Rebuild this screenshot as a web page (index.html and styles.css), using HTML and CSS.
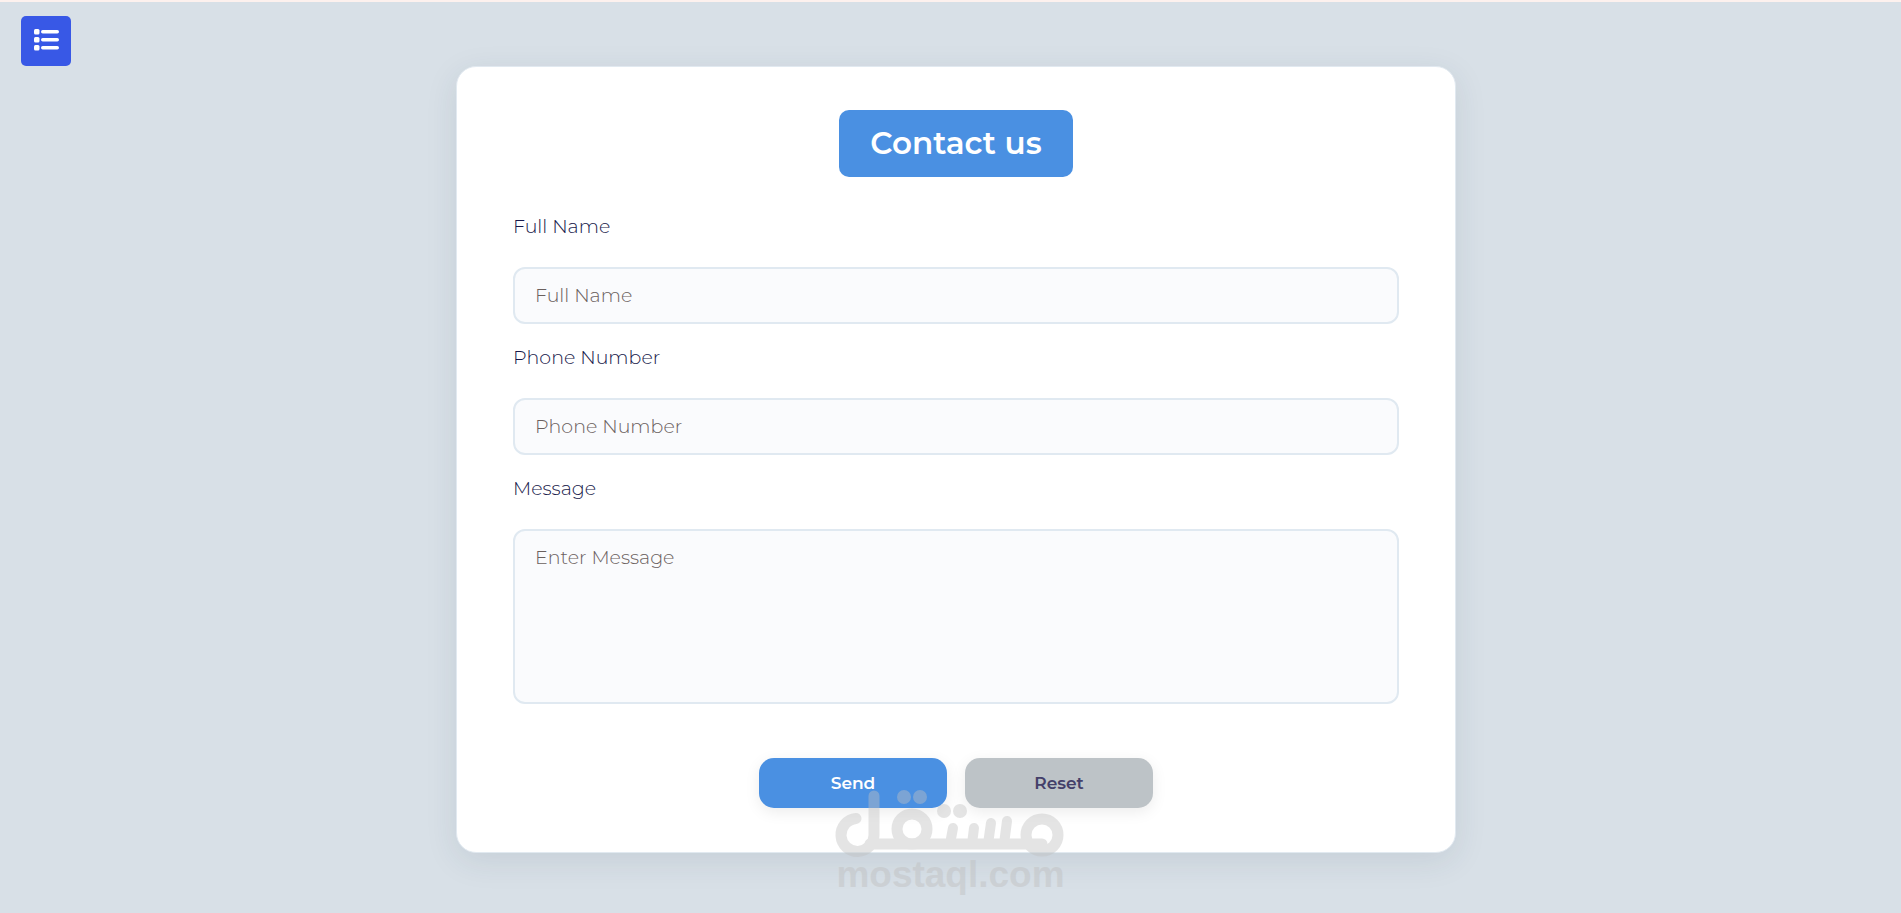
FILE: index.html
```html
<!DOCTYPE html>
<html lang="en">
<head>
    <meta charset="UTF-8">
    <meta name="viewport" content="width=device-width, initial-scale=1.0">
    <title>Contact us</title>
    <link rel="stylesheet" href="styles.css">
</head>
<body>
    <button type="button" class="menu-btn" aria-label="Menu">
        <svg width="25" height="22" viewBox="0 0 25 22" fill="#fff">
            <rect x="0" y="0" width="5.500" height="5.500" rx="1.500"/>
            <rect x="7" y="1" width="18" height="3.500" rx="1.700"/>
            <rect x="0" y="8" width="5.500" height="5.500" rx="1.500"/>
            <rect x="7" y="9" width="18" height="3.500" rx="1.700"/>
            <rect x="0" y="16" width="5.500" height="5.500" rx="1.500"/>
            <rect x="7" y="17" width="18" height="3.500" rx="1.700"/>
        </svg>
    </button>

    <main class="container">
        <h1 class="title">Contact us</h1>

        <form class="contact-form">
            <label for="fullName">Full Name</label>
            <input type="text" id="fullName" placeholder="Full Name">

            <label for="phone">Phone Number</label>
            <input type="tel" id="phone" placeholder="Phone Number">

            <label for="message">Message</label>
            <textarea id="message" placeholder="Enter Message"></textarea>

            <div class="buttons">
                <button type="submit" class="btn send">Send</button>
                <button type="reset" class="btn reset">Reset</button>
            </div>
        </form>
    </main>

    <div class="watermark">
        <svg width="232" height="72" viewBox="0 0 232 72" fill="none" stroke="#c1c1c1" stroke-width="11" stroke-linecap="round" aria-hidden="true">
            <path d="M21 30.500A16.500 16.500 0 1 0 39 47V8"/>
            <path d="M35 56H207"/>
            <circle cx="77" cy="41" r="15"/>
            <circle cx="207" cy="47" r="16"/>
            <path d="M118 40L115 56M139 40L137 56M156 35L153 56M172 33L169 56" stroke-width="10"/>
            <g fill="#c1c1c1" stroke="none">
                <circle cx="69" cy="9" r="7"/>
                <circle cx="85" cy="9" r="7"/>
                <circle cx="109" cy="23" r="7"/>
                <circle cx="125" cy="23" r="7"/>
            </g>
        </svg>
        <span>mostaql.com</span>
    </div>
</body>
</html>
```

FILE: styles.css
```css
* {
    box-sizing: border-box;
}

body {
    margin: 0;
    min-height: 100vh;
    padding: 64px 0 60px 11px;
    font-family: "Montserrat", "Inter", sans-serif;
    font-size: 19px;
    background-color: #d8e0e7;
    border-top: 2px solid #fdf1ee;
    position: relative;
}

.menu-btn {
    position: absolute;
    top: 14px;
    left: 21px;
    width: 50px;
    height: 50px;
    padding: 0;
    display: flex;
    align-items: center;
    justify-content: center;
    border: none;
    border-radius: 5px;
    background-color: #3858e6;
    cursor: pointer;
}

.menu-btn svg {
    margin-bottom: 3px;
}

.container {
    max-width: 1000px;
    margin: 0 auto;
    padding: 43px 56px 44px;
    display: flex;
    flex-direction: column;
    align-items: center;
    background-color: #fff;
    border: 1px solid #e1e9f0;
    border-radius: 20px;
    box-shadow: 0 8px 32px rgba(44, 62, 80, 0.1);
}

.title {
    margin: 0 0 37px;
    padding: 14px 31px;
    font-size: 31px;
    font-weight: 600;
    line-height: 39px;
    color: #fff;
    background-color: #4a90e2;
    border-radius: 10px;
}

.contact-form {
    width: 100%;
    display: flex;
    flex-direction: column;
}

.contact-form label {
    margin-bottom: 27px;
    line-height: 26px;
    font-weight: 300;
    color: #16184a;
}

.contact-form input,
.contact-form textarea {
    width: 100%;
    height: 57px;
    margin-bottom: 21px;
    padding: 14px 20px;
    font-family: inherit;
    font-size: inherit;
    font-weight: 300;
    line-height: 26px;
    background-color: #fafbfd;
    border: 2px solid #e0e9f1;
    border-radius: 12px;
    outline: none;
}

.contact-form textarea {
    height: 175px;
    margin-bottom: 54px;
    resize: none;
}

.contact-form ::placeholder {
    color: #6a605e;
}

.contact-form input:focus,
.contact-form textarea:focus {
    border-color: #4a90e2;
}

.buttons {
    display: flex;
    justify-content: center;
    gap: 18px;
}

.btn {
    width: 188px;
    height: 50px;
    font-family: inherit;
    font-size: 17px;
    font-weight: 600;
    border: none;
    border-radius: 15px;
    box-shadow: 0 4px 15px rgba(0, 0, 0, 0.08);
    cursor: pointer;
}

.send {
    color: #fff;
    background-color: #4a90e2;
}

.reset {
    color: #44406a;
    background-color: #bdc3c7;
}

/* logo over the bottom edge of the card */
.watermark {
    position: absolute;
    top: 786px;
    left: 50%;
    transform: translateX(-50%);
    display: flex;
    flex-direction: column;
    align-items: center;
    opacity: 0.42;
    pointer-events: none;
}

.watermark span {
    font-family: "Liberation Sans", Arial, sans-serif;
    font-size: 37px;
    font-weight: bold;
    line-height: 42px;
    margin-top: -6px;
    color: #bdbdbd;
}
```
